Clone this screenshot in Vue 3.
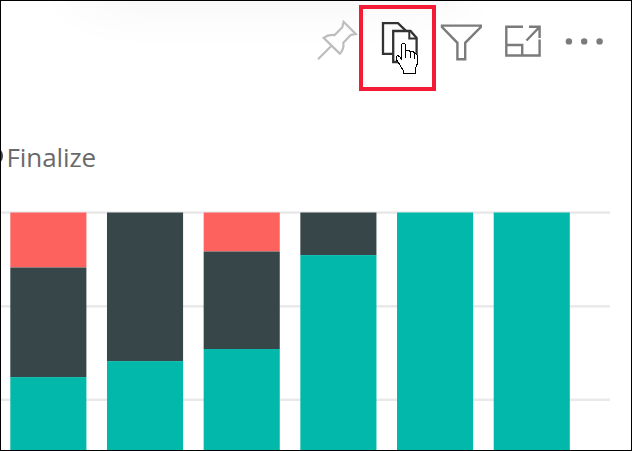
<script setup>
const TEAL = '#01b8aa'
const SLATE = '#374649'
const CORAL = '#fd625e'
const TOP = 212.5
const BOTTOM = 450

const columns = [
  [{ color: CORAL, end: 267.5 }, { color: SLATE, end: 377.1 }, { color: TEAL, end: BOTTOM }],
  [{ color: SLATE, end: 361.1 }, { color: TEAL, end: BOTTOM }],
  [{ color: CORAL, end: 251.5 }, { color: SLATE, end: 349 }, { color: TEAL, end: BOTTOM }],
  [{ color: SLATE, end: 255.1 }, { color: TEAL, end: BOTTOM }],
  [{ color: TEAL, end: BOTTOM }],
  [{ color: TEAL, end: BOTTOM }],
]

const bars = columns.flatMap((segments, c) =>
  segments.map((s, i) => {
    const y = i ? segments[i - 1].end : TOP
    return { x: 10.3 + c * 96.68, y, h: s.end - y, color: s.color }
  })
)
const gridLines = [212.6, 306.3, 399.8]
</script>

<template>
  <main class="visual">
    <div class="shade"></div>
    <header class="toolbar">
      <svg class="pin" width="44" height="44" viewBox="315 18 44 44">
        <path d="M343.6 21.8 355.8 34 350.7 35 343.3 42.8C344 47 343 50.5 339.8 53.6L323.6 37.8C327 35.3 330.6 34.6 334.6 35.1L342.3 27.3ZM331.5 45.8 318 59.3" />
      </svg>
      <button class="copy" aria-label="Copy">
        <svg width="69" height="78" viewBox="363 9 69 78">
          <g class="pages">
            <path d="M393 53.8H383V23.2H398L406 30.8" />
            <path d="M416.6 64V38L410.5 31H393.2V62H404" />
            <path class="fold" d="M409.3 31V38.6H416.6" />
          </g>
          <path class="hand" d="M402.5 43.5H404.5L405.5 44.5V51.5L406.5 50.5H408.5L410.5 51.5V53L411.5 51.5H413.5L414.5 53V54.5L415.5 53.5L417.5 55.5V63.5L415.5 68.5V73.5H403.5V70.5L399.5 64.5L396.5 59.5V56.5L397.5 55.5L399.5 56.5L401.5 59.5V44.5Z" />
          <path class="hand" d="M405.5 51V58M410.5 52V58M414.5 54V59" />
        </svg>
      </button>
      <svg class="tools" width="170" height="50" viewBox="438 16 170 50">
        <path d="M442 25.6H480.8V27L465.2 42.8V59.3H457.4V42.8L442 27Z" />
        <path d="M523 26.8H506.3V55.5H539.6V39.5M506.3 45H522.2V55.5M526.5 40.5 539 27.5M529 26.8H539.6V38" />
        <g class="dots">
          <circle cx="568.9" cy="41.4" r="3.2" />
          <circle cx="584.2" cy="41.4" r="3.2" />
          <circle cx="599.6" cy="41.4" r="3.2" />
        </g>
      </svg>
    </header>
    <div class="legend"><i class="marker"></i><span>Finalize</span></div>
    <svg class="chart" width="630" height="245" viewBox="1 205 630 245">
      <rect v-for="y in gridLines" :key="y" x="1" :y="y - 1.25" width="609" height="2.5" fill="#e9e9e9" />
      <rect v-for="(b, i) in bars" :key="i" :x="b.x" :y="b.y" width="76.1" :height="b.h" :fill="b.color" />
    </svg>
  </main>
</template>

<style>
body { margin: 0; background: #fff; }
</style>

<style scoped>
.visual {
  position: relative;
  box-sizing: border-box;
  width: 632px;
  height: 451px;
  border: 1px solid #000;
  overflow: hidden;
  background: #fff;
  display: flex;
  flex-direction: column;
}
.shade {
  position: absolute;
  left: 90px;
  top: -34px;
  width: 360px;
  height: 24px;
  box-shadow: 0 0 56px 10px rgba(0, 0, 0, .06);
}
.toolbar {
  position: relative;
  display: flex;
  align-items: flex-start;
  padding: 4px 0 0 314px;
  height: 88px;
  box-sizing: border-box;
}
svg { display: block; flex: none; }
.pin {
  margin-top: 13px;
  fill: none;
  stroke: #bdbdbd;
  stroke-width: 2.2;
}
.copy {
  flex: none;
  box-sizing: border-box;
  width: 77px;
  height: 86px;
  padding: 0;
  border: 4px solid #f31b36;
  background: transparent;
}
.pages path { fill: none; stroke: #333; stroke-width: 2.3; }
.pages .fold { stroke-width: 2; }
.hand { fill: #fff; stroke: #000; stroke-width: 1.1; shape-rendering: crispEdges; }
.tools {
  margin: 11px 0 0 2px;
  fill: none;
  stroke: #7b7b7b;
  stroke-width: 2.4;
}
.dots { fill: #7b7b7b; stroke: none; }
.legend {
  display: flex;
  align-items: center;
  height: 34px;
  margin-top: 51px;
  font: 26px/34px "Open Sans", "Noto Sans", sans-serif;
  letter-spacing: -.1px;
  color: #6a6a6a;
}
.marker {
  flex: none;
  width: 18px;
  height: 18px;
  margin: -2px 4px 0 -16.5px;
  border-radius: 50%;
  background: #374649;
}
.chart { margin-top: 31px; }
</style>
